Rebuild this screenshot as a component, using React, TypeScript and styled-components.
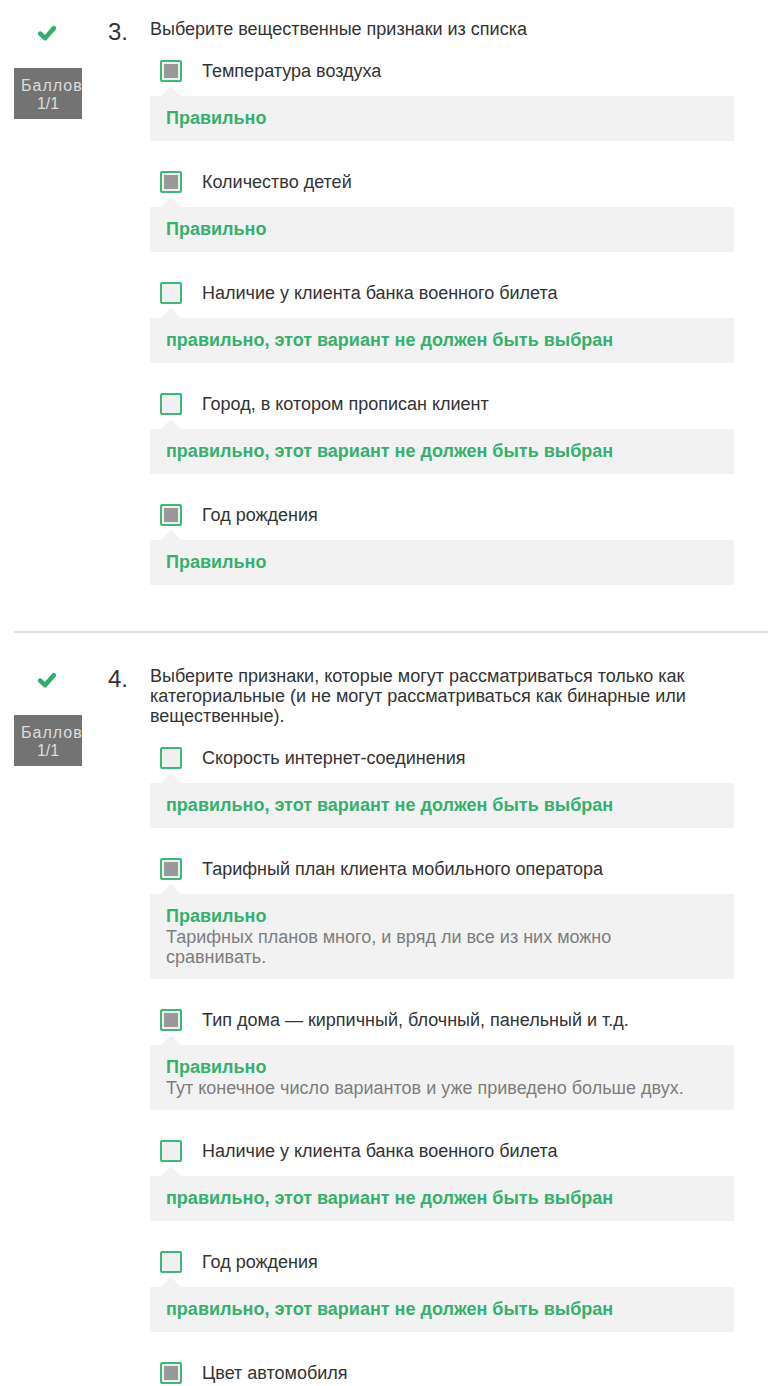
import React from "react";
import styled, { createGlobalStyle } from "styled-components";

const GlobalStyle = createGlobalStyle`
  html, body {
    margin: 0;
    padding: 0;
    background: #ffffff;
  }
  body {
    font-family: "Liberation Sans", Arial, sans-serif;
    color: #333333;
  }
`;

const Page = styled.div`
  width: 768px;
  padding-top: 19px;
`;

const Question = styled.section<{ $first?: boolean }>`
  display: flex;
  align-items: flex-start;
  padding: ${(p) => (p.$first ? "0" : "33px")} 34px 46px 14px;
`;

const Divider = styled.hr`
  margin: 0 0 0 14px;
  border: none;
  height: 2px;
  background: #e0e0e0;
`;

const Side = styled.div`
  width: 68px;
  flex: none;
  display: flex;
  flex-direction: column;
  align-items: center;
`;

const CheckMark = styled.svg`
  display: block;
  width: 20px;
  height: 18px;
  margin-top: 5px;
  margin-left: -2px;
`;

const ScoreBox = styled.div`
  margin-top: 26px;
  width: 68px;
  height: 51px;
  box-sizing: border-box;
  padding-top: 9px;
  background: #737373;
  color: #dcdcdc;
  font-size: 16px;
  line-height: 18px;
  overflow: hidden;
  white-space: nowrap;
`;

const ScoreLabel = styled.div`
  padding-left: 7px;
  letter-spacing: 1px;
`;

const ScoreValue = styled.div`
  text-align: center;
`;

const Number = styled.div`
  width: 42px;
  flex: none;
  margin-left: 26px;
  font-size: 24px;
  line-height: 28px;
  color: #333333;
  margin-top: -1px;
`;

const Content = styled.div`
  flex: 1;
  min-width: 0;
`;

const QuestionText = styled.div`
  font-size: 18px;
  line-height: 20px;
  color: #333333;
  margin-bottom: 21px;
`;

const Options = styled.div`
  display: flex;
  flex-direction: column;
  gap: 30px;
`;

const OptionRow = styled.div`
  display: flex;
  align-items: center;
  gap: 20px;
  padding-left: 10px;
`;

const Box = styled.span`
  width: 22px;
  height: 22px;
  box-sizing: border-box;
  border: 2px solid #3cb878;
  border-radius: 2px;
  padding: 2px;
  background: #f0f0f0;
  flex: none;
  display: flex;
`;

const BoxFill = styled.span`
  flex: 1;
  background: #999999;
`;

const Label = styled.span`
  font-size: 18px;
  line-height: 22px;
  color: #333333;
`;

const Feedback = styled.div`
  position: relative;
  margin-top: 14px;
  background: #f2f2f2;
  padding: 12px 16px;

  &::before {
    content: "";
    position: absolute;
    left: 11px;
    top: -10px;
    border-left: 10px solid transparent;
    border-right: 10px solid transparent;
    border-bottom: 10px solid #f2f2f2;
  }
`;

const FeedbackTitle = styled.div`
  font-size: 18px;
  line-height: 21px;
  font-weight: 700;
  color: #35b06f;
`;

const Explanation = styled.div`
  font-size: 18px;
  line-height: 20px;
  color: #7d7d7d;
  max-width: 525px;
`;

type Opt = { label: string; checked: boolean; title: string; note?: string };

const WRONG = "правильно, этот вариант не должен быть выбран";

const q3: Opt[] = [
  { label: "Температура воздуха", checked: true, title: "Правильно" },
  { label: "Количество детей", checked: true, title: "Правильно" },
  { label: "Наличие у клиента банка военного билета", checked: false, title: WRONG },
  { label: "Город, в котором прописан клиент", checked: false, title: WRONG },
  { label: "Год рождения", checked: true, title: "Правильно" },
];

const q4: Opt[] = [
  { label: "Скорость интернет-соединения", checked: false, title: WRONG },
  {
    label: "Тарифный план клиента мобильного оператора",
    checked: true,
    title: "Правильно",
    note: "Тарифных планов много, и вряд ли все из них можно сравнивать.",
  },
  {
    label: "Тип дома — кирпичный, блочный, панельный и т.д.",
    checked: true,
    title: "Правильно",
    note: "Тут конечное число вариантов и уже приведено больше двух.",
  },
  { label: "Наличие у клиента банка военного билета", checked: false, title: WRONG },
  { label: "Год рождения", checked: false, title: WRONG },
];

const Check = () => (
  <CheckMark viewBox="0 0 20 18">
    <polyline
      points="3.2,9.6 8,14.2 16.8,4.2"
      fill="none"
      stroke="#2fae6c"
      strokeWidth="4.6"
      strokeLinecap="round"
      strokeLinejoin="round"
    />
  </CheckMark>
);

const OptionBlock = ({ o }: { o: Opt }) => (
  <div>
    <OptionRow>
      <Box>{o.checked && <BoxFill />}</Box>
      <Label>{o.label}</Label>
    </OptionRow>
    <Feedback>
      <FeedbackTitle>{o.title}</FeedbackTitle>
      {o.note && <Explanation>{o.note}</Explanation>}
    </Feedback>
  </div>
);

const QuestionBlock = ({
  n,
  text,
  opts,
  first,
  tail,
}: {
  n: number;
  text: string;
  opts: Opt[];
  first?: boolean;
  tail?: React.ReactNode;
}) => (
  <Question $first={first}>
    <Side>
      <Check />
      <ScoreBox>
        <ScoreLabel>Баллов</ScoreLabel>
        <ScoreValue>1/1</ScoreValue>
      </ScoreBox>
    </Side>
    <Number>{n}.</Number>
    <Content>
      <QuestionText>{text}</QuestionText>
      <Options>
        {opts.map((o, i) => (
          <OptionBlock key={i} o={o} />
        ))}
        {tail}
      </Options>
    </Content>
  </Question>
);

export default function App() {
  return (
    <Page>
      <GlobalStyle />
      <QuestionBlock
        first
        n={3}
        text="Выберите вещественные признаки из списка"
        opts={q3}
      />
      <Divider />
      <QuestionBlock
        n={4}
        text="Выберите признаки, которые могут рассматриваться только как категориальные (и не могут рассматриваться как бинарные или вещественные)."
        opts={q4}
        tail={
          <OptionRow>
            <Box>
              <BoxFill />
            </Box>
            <Label>Цвет автомобиля</Label>
          </OptionRow>
        }
      />
    </Page>
  );
}
